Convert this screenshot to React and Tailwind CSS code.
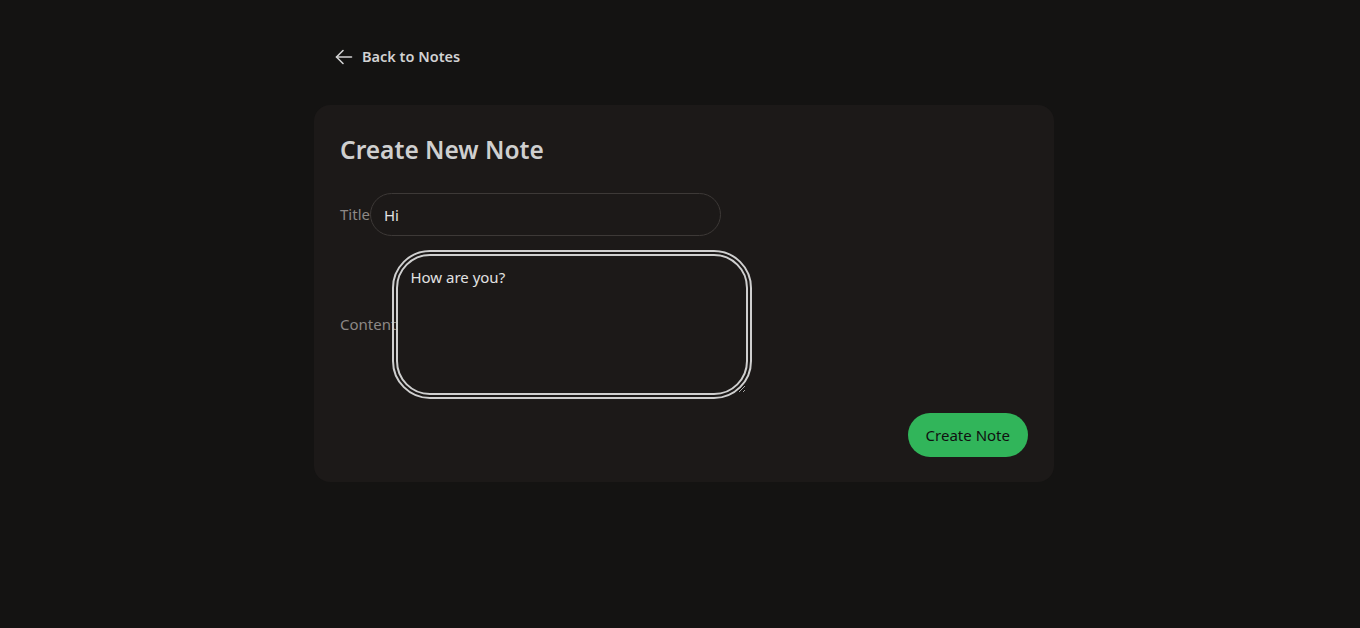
import React, { useState } from 'react';

export default function App() {
  const [title, setTitle] = useState('Hi');
  const [content, setContent] = useState('How are you?');

  return (
    <div
      className="min-h-screen w-full bg-[#141312] text-[#d4d4d4]"
      style={{ fontFamily: '"Noto Sans", "Open Sans", sans-serif' }}
    >
      <div className="flex justify-center pt-[45px]">
        <div className="w-[748px] pl-2">
          {/* Back link */}
          <a href="#" className="ml-[18px] inline-flex items-center gap-[6px] text-[14.5px] font-semibold text-[#d2d2d2]">
            <svg width="24" height="24" viewBox="0 0 24 24" fill="none" stroke="currentColor" strokeWidth="1.6" strokeLinecap="round" strokeLinejoin="round">
              <path d="M19.5 12H4.5" />
              <path d="M11 18.5L4.5 12 11 5.5" />
            </svg>
            <span>Back to Notes</span>
          </a>

          {/* Card */}
          <div className="mt-[30px] rounded-2xl bg-[#1c1918] px-[26px] pt-[28px] pb-[25px]">
            <h1 className="text-[24.5px] font-semibold text-[#cfcfcf] leading-[34px]">Create New Note</h1>

            <form className="mt-[26px] flex flex-col" onSubmit={(e) => e.preventDefault()}>
              <div className="flex items-center">
                <label className="text-[15px] text-[#8c8886]">Title</label>
                <input
                  value={title}
                  onChange={(e) => setTitle(e.target.value)}
                  className="h-[43px] w-[351px] rounded-full border border-[#3d3937] bg-[#1c1918] px-[13px] text-[15px] text-[#e2e2e2] outline-none"
                />
              </div>

              <div className="mt-[18px] flex items-center">
                <label className="text-[15px] text-[#8c8886]">Content</label>
                <textarea
                  value={content}
                  onChange={(e) => setContent(e.target.value)}
                  className="block h-[141px] w-[352px] rounded-[34px] border-2 border-[#cfcfcf] bg-[#1c1918] px-[12px] py-[10px] text-[15px] text-[#e2e2e2] outline-2 outline-offset-2 outline-[#cfcfcf]"
                />
              </div>

              <div className="mt-[18px] flex justify-end">
                <button
                  type="submit"
                  className="h-[44px] rounded-full bg-[#31b55a] px-[18px] text-[15px] text-[#101010]"
                >
                  Create Note
                </button>
              </div>
            </form>
          </div>
        </div>
      </div>
    </div>
  );
}
